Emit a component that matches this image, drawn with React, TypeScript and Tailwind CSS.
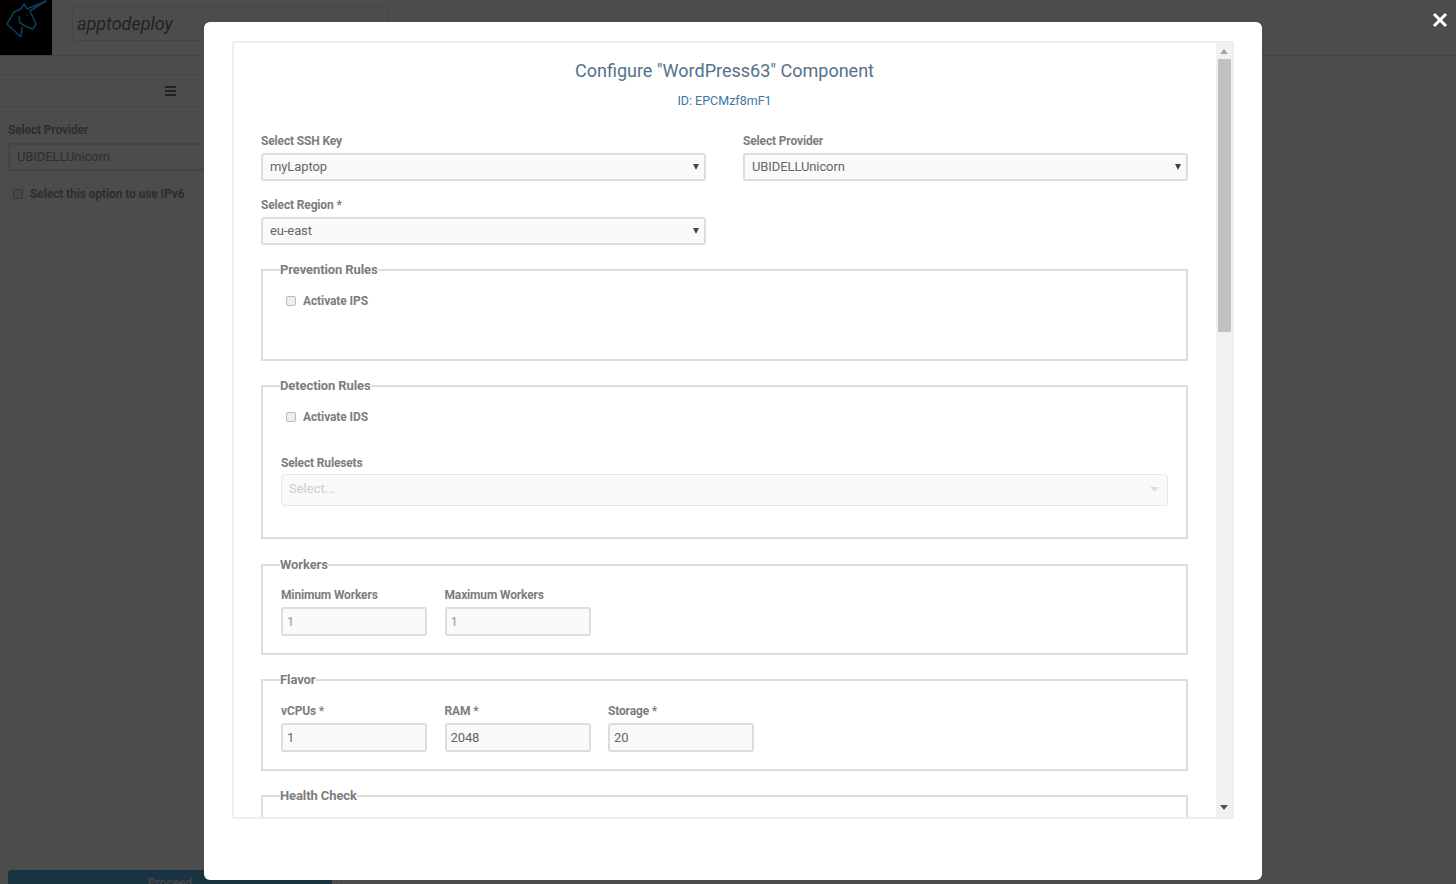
import React from "react";

function Label({ children, tight }: { children: React.ReactNode; tight?: boolean }) {
    return (
        <label className={`block text-[12px] leading-[14px] font-bold text-[#7d7d7d] tracking-[-0.15px] ${tight ? "mb-[4px]" : "mb-[5px]"}`}>
            {children}
        </label>
    );
}

function Arrow() {
    return (
        <svg className="absolute right-[5px] top-[9px]" width="6" height="6" viewBox="0 0 6 6">
            <path d="M0 0h6L3 6z" fill="#444" />
        </svg>
    );
}

function SelectBox({ value }: { value: string }) {
    return (
        <div className="relative h-[28px] border-2 border-[#ddd] rounded-[3px] bg-[#fafafa] px-[7px] text-[13px] leading-[24px] text-[#666] tracking-[-0.1px]">
            {value}
            <Arrow />
        </div>
    );
}

function NumberBox({ value, light }: { value: string; light?: boolean }) {
    return (
        <div>
            <input
                readOnly
                value={value}
                className={`block w-[146px] h-[29px] border-2 border-[#ddd] rounded-[3px] bg-[#fafafa] px-[4px] text-[13px] tracking-[-0.1px] outline-none ${light ? "text-[#999]" : "text-[#666]"}`}
            />
        </div>
    );
}

function Group({ title, className, children }: { title: string; className: string; children?: React.ReactNode }) {
    return (
        <fieldset className={`border-2 border-[#ddd] px-[18px] ${className}`}>
            <legend className="text-[13px] leading-[14px] font-bold text-[#7d7d7d] tracking-[-0.1px] p-0 -ml-[1px]">{title}</legend>
            {children}
        </fieldset>
    );
}

function Check({ label }: { label: string }) {
    return (
        <div className="flex items-center gap-[7px] pl-[5px] h-[14px]">
            <span className="w-[10px] h-[10px] rounded-[2px] border border-[#bbb] bg-[#eee]" />
            <span className="text-[12px] leading-[14px] font-bold text-[#7d7d7d] tracking-[-0.1px]">{label}</span>
        </div>
    );
}

function Modal() {
    return (
        <div className="absolute left-[204px] top-[22px] w-[1058px] h-[858px] bg-white rounded-[6px] pl-[28px] pt-[19px]">
            <div className="w-[1002px] h-[778px] border-2 border-[#eee] rounded-[2px] flex overflow-hidden">
                <div className="flex-1 overflow-hidden pl-[27px] pr-[28px]">
                    <h2 className="text-center text-[18px] leading-[24px] text-[#54718a] mt-[16px]">
                        Configure "WordPress63" Component
                    </h2>
                    <p className="text-center text-[12.5px] leading-[14px] text-[#3f76a0] mt-[11px]">ID: EPCMzf8mF1</p>

                    <div className="grid grid-cols-[445px_445px] gap-x-[37px] mt-[26px]">
                        <div>
                            <Label>Select SSH Key</Label>
                            <SelectBox value="myLaptop" />
                        </div>
                        <div>
                            <Label>Select Provider</Label>
                            <SelectBox value="UBIDELLUnicorn" />
                        </div>
                    </div>
                    <div className="w-[445px] mt-[17px]">
                        <Label>Select Region *</Label>
                        <SelectBox value="eu-east" />
                    </div>

                    <Group title="Prevention Rules" className="h-[98px] mt-[18px] pt-[17px]">
                        <Check label="Activate IPS" />
                    </Group>

                    <Group title="Detection Rules" className="h-[160px] mt-[18px] pt-[17px]">
                        <Check label="Activate IDS" />
                        <div className="mt-[32px]">
                            <Label tight>Select Rulesets</Label>
                            <div className="relative h-[32px] border border-[#e6e6e6] rounded-[4px] bg-[#fafafa] px-[7px] text-[13px] leading-[28px] text-[#ccc]">
                                Select...
                                <svg className="absolute right-[8px] top-[12px]" width="9" height="6" viewBox="0 0 9 6">
                                    <path d="M0 0h9L4.500 5z" fill="#ddd" />
                                </svg>
                            </div>
                        </div>
                    </Group>

                    <Group title="Workers" className="h-[97px] mt-[19px] pt-[16px]">
                        <div className="flex gap-[17.500px]">
                            <div>
                                <Label>Minimum Workers</Label>
                                <NumberBox value="1" light />
                            </div>
                            <div>
                                <Label>Maximum Workers</Label>
                                <NumberBox value="1" light />
                            </div>
                        </div>
                    </Group>

                    <Group title="Flavor" className="h-[98px] mt-[18px] pt-[17px]">
                        <div className="flex gap-[17.500px]">
                            <div>
                                <Label>vCPUs *</Label>
                                <NumberBox value="1" />
                            </div>
                            <div>
                                <Label>RAM *</Label>
                                <NumberBox value="2048" />
                            </div>
                            <div>
                                <Label>Storage *</Label>
                                <NumberBox value="20" />
                            </div>
                        </div>
                    </Group>

                    <Group title="Health Check" className="h-[98px] mt-[18px]" />
                </div>

                <div className="w-[16px] bg-[#f1f1f1] flex flex-col shrink-0">
                    <div className="h-[16px] flex items-center justify-center">
                        <svg width="8" height="5" viewBox="0 0 8 5"><path d="M0 5h8L4 0z" fill="#a3a3a3" /></svg>
                    </div>
                    <div className="h-[273px] ml-[2px] mr-[1px] bg-[#c1c1c1]" />
                    <div className="flex-1" />
                    <div className="h-[18px] pb-[2px] flex items-center justify-center">
                        <svg width="8" height="5" viewBox="0 0 8 5"><path d="M0 0h8L4 5z" fill="#505050" /></svg>
                    </div>
                </div>
            </div>
        </div>
    );
}

export default function App() {
    return (
        <div className="relative h-[884px] overflow-hidden bg-[#4c4c4c] font-['Roboto',sans-serif]">
            <div className="flex items-start h-[56px] border-b border-[#424242]">
                <div className="w-[52px] h-[55px] bg-black shrink-0">
                    <svg width="52" height="55" viewBox="0 0 52 55" fill="none" stroke="#0d3f58" strokeWidth="1.500" strokeLinejoin="round">
                        <path d="M21 37L7 24L14 12L21 9L24 4L27 9L46 1L30 11L36 24L33 29L27 27L20 23L19 16" />
                        <path d="M21 37L22 27" />
                        <circle cx="27" cy="15" r="0.800" fill="#0d3f58" stroke="none" />
                    </svg>
                </div>
                <div className="ml-[20px] mt-[6px] w-[317px] h-[35px] border border-[#444] rounded-[4px] px-[4px] text-[18px] leading-[33px] italic text-[#222]">
                    apptodeploy
                </div>
            </div>

            <div className="mt-[18px] w-[341px] h-[33px] border-y border-[#444] flex items-center justify-center">
                <div className="w-[11px] flex flex-col gap-[2px]">
                    <span className="h-[2px] bg-[#222]" />
                    <span className="h-[2px] bg-[#222]" />
                    <span className="h-[2px] bg-[#222]" />
                </div>
            </div>

            <div className="w-[341px] px-[8px] pt-[16px]">
                <div className="text-[12px] leading-[14px] font-bold text-[#2e2e2e] tracking-[-0.15px] mb-[6px]">Select Provider</div>
                <div className="h-[28px] border-2 border-[#444] rounded-[3px] px-[7px] text-[13px] leading-[24px] text-[#2e2e2e] tracking-[-0.1px]">
                    UBIDELLUnicorn
                </div>
                <div className="flex items-center gap-[7px] mt-[16px] pl-[5px]">
                    <span className="w-[10px] h-[10px] rounded-[2px] border border-[#353535] bg-[#474747]" />
                    <span className="text-[12px] leading-[14px] font-bold text-[#2e2e2e] tracking-[-0.1px]">Select this option to use IPv6</span>
                </div>
            </div>

            <div className="absolute left-[8px] top-[870px] w-[324px] h-[30px] rounded-[3px] bg-[#1a3341] text-center text-[12px] leading-[26px] font-bold text-[#444]">
                Proceed
            </div>
            <div className="absolute left-[341px] top-[870px] w-px h-[14px] bg-[#444]" />

            <Modal />

            <svg className="absolute left-[1432px] top-[12px]" width="16" height="16" viewBox="0 0 16 16">
                <path d="M2 2L14 14M14 2L2 14" stroke="#fff" strokeWidth="3" />
            </svg>
        </div>
    );
}
